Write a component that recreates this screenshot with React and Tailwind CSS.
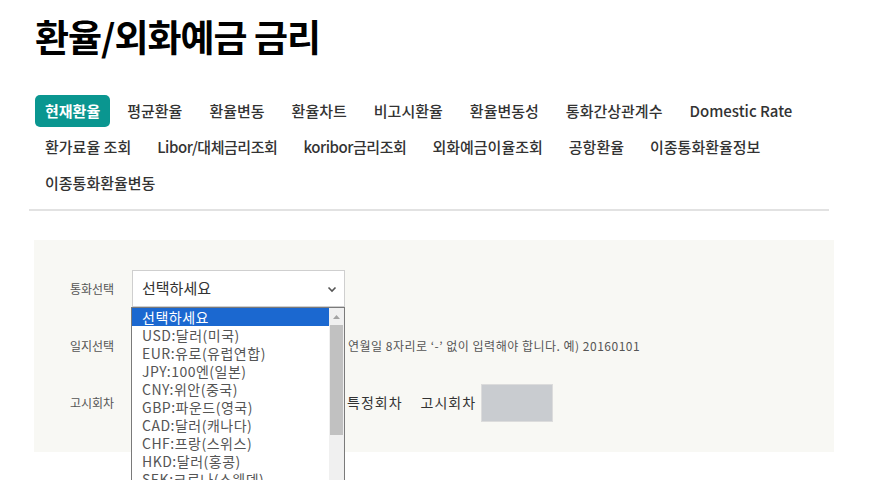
import React from "react";

const tabRows = [
	["현재환율", "평균환율", "환율변동", "환율차트", "비고시환율", "환율변동성", "통화간상관계수", "Domestic Rate"],
	["환가료율 조회", "Libor/대체금리조회", "koribor금리조회", "외화예금이율조회", "공항환율", "이종통화환율정보"],
	["이종통화환율변동"],
];

const currencies = [
	"선택하세요",
	"USD:달러(미국)",
	"EUR:유로(유럽연합)",
	"JPY:100엔(일본)",
	"CNY:위안(중국)",
	"GBP:파운드(영국)",
	"CAD:달러(캐나다)",
	"CHF:프랑(스위스)",
	"HKD:달러(홍콩)",
	"SEK:크로나(스웨덴)",
	"AUD:달러(호주)",
];

const font = { fontFamily: '"Noto Sans CJK KR", "Noto Sans", sans-serif' };

const App = () => {
	return (
		<div className="w-[884px] h-[480px] overflow-hidden bg-white text-[#222]" style={font}>
			<div className="pl-[35px] pr-[55px]">
				<h1 className="pt-[11px] text-[37px] leading-[50px] font-bold tracking-[-1px] text-black">
					환율/외화예금 금리
				</h1>

				<nav className="mt-[34px] flex flex-col gap-[4px]">
					{tabRows.map((row, r) => (
						<div key={r} className={r === 0 ? "flex gap-[7px]" : "flex gap-[6px]"}>
							{row.map((tab, i) => {
								const active = r === 0 && i === 0;
								const latin = /[a-z]/.test(tab) && r === 1;
								return (
									<a
										key={tab}
										className={
											active
												? "h-[32px] px-[10px] flex items-center rounded-[5px] bg-[#0a9690] text-white font-bold text-[15px]"
												: latin
													? "h-[32px] px-[10px] flex items-center text-[#333] font-medium text-[15px] tracking-[-0.45px]"
													: "h-[32px] px-[10px] flex items-center text-[#333] font-medium text-[15px]"
										}
									>
										{tab}
									</a>
								);
							})}
						</div>
					))}
				</nav>
			</div>

			<div className="ml-[29px] mt-[10px] w-[800px] border-t-2 border-[#e2e2e2]" />

			<div className="relative ml-[34px] mt-[29px] w-[800px] bg-[#f8f8f4] pt-[30px] pb-[31px] pl-[36px]">
				<div className="flex flex-col gap-[20px]">
					<div className="flex items-center h-[37px]">
						<span className="w-[62px] text-[12px] text-[#555]">통화선택</span>
						<div className="w-[213px] h-[37px] bg-white border border-[#cfcfcf] flex items-center justify-between pl-[9px] pr-[7px]">
							<span className="text-[15px] text-[#333]">선택하세요</span>
							<svg width="10" height="8" viewBox="0 0 10 8">
								<path d="M1.5 2.5 L5 6 L8.5 2.5" fill="none" stroke="#555" strokeWidth="1.6" />
							</svg>
						</div>
					</div>
					<div className="flex items-center h-[37px]">
						<span className="w-[62px] text-[12px] text-[#555]">일지선택</span>
						<div className="w-[213px] h-[37px] bg-white border border-[#cfcfcf]" />
						<span className="ml-[3px] text-[12px] tracking-[0.5px] text-[#555]">
							연월일 8자리로 ‘-’ 없이 입력해야 합니다. 예) 20160101
						</span>
					</div>
					<div className="flex items-center h-[37px]">
						<span className="w-[62px] text-[12px] text-[#555]">고시회차</span>
						<div className="w-[213px]" />
						<span className="ml-[2px] text-[14px] tracking-[1px] text-[#333]">특정회차</span>
						<span className="ml-[18px] text-[14px] tracking-[1px] text-[#333]">고시회차</span>
						<div className="ml-[5px] w-[72px] h-[38px] bg-[#c9ccd0] border border-[#dcdcdc]" />
					</div>
				</div>

				<div className="absolute left-[97px] top-[67px] w-[214px] h-[200px] bg-white border border-[#7a7a7a] flex">
					<ul className="flex-1">
						{currencies.map((c, i) => (
							<li
								key={c}
								className={
									i === 0
										? "h-[18px] leading-[18px] pl-[10px] text-[14px] tracking-[0.5px] bg-[#1b68d0] text-white"
										: "h-[18px] leading-[18px] pl-[10px] text-[14px] tracking-[0.5px] text-[#555]"
								}
							>
								{c}
							</li>
						))}
					</ul>
					<div className="w-[15px] bg-[#f0f0f0] flex flex-col items-center">
						<svg width="15" height="17" viewBox="0 0 15 17">
							<path d="M4 11 L7.5 7 L11 11 Z" fill="#a3a3a3" />
						</svg>
						<div className="w-[13px] h-[110px] bg-[#c1c1c1]" />
					</div>
				</div>
			</div>
		</div>
	);
};

export default App;
